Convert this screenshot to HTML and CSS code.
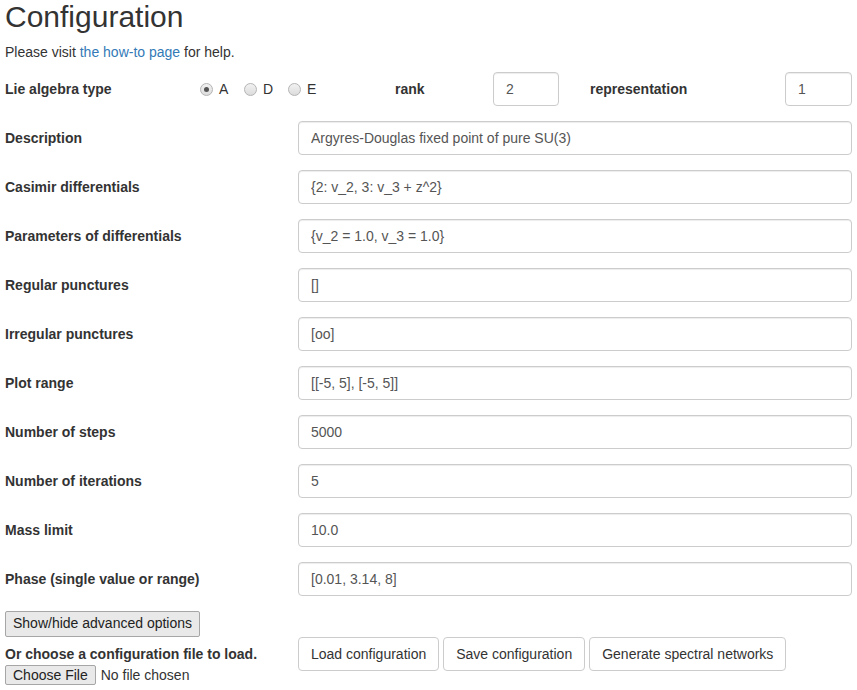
FILE: index.html
```html
<!DOCTYPE html>
<html>
<head>
<meta charset="utf-8">
<title>Configuration</title>
<link rel="stylesheet" href="styles.css">
</head>
<body>
<div class="page">
  <h2 class="title">Configuration</h2>
  <p class="intro">Please visit <a href="#" class="link">the how-to page</a> for help.</p>

  <div class="top-row">
    <label class="lbl">Lie algebra type</label>
    <div class="radios">
      <label class="radio-item"><input type="radio" name="type" class="radio" checked><span>A</span></label>
      <label class="radio-item"><input type="radio" name="type" class="radio"><span>D</span></label>
      <label class="radio-item"><input type="radio" name="type" class="radio"><span>E</span></label>
    </div>
    <label class="lbl">rank</label>
    <div><input type="text" class="field field-small" value="2"></div>
    <label class="lbl">representation</label>
    <div><input type="text" class="field field-small2" value="1"></div>
  </div>

  <div class="form-row"><label class="lbl">Description</label><input type="text" class="field" value="Argyres-Douglas fixed point of pure SU(3)"></div>
  <div class="form-row"><label class="lbl">Casimir differentials</label><input type="text" class="field" value="{2: v_2, 3: v_3 + z^2}"></div>
  <div class="form-row"><label class="lbl">Parameters of differentials</label><input type="text" class="field" value="{v_2 = 1.0, v_3 = 1.0}"></div>
  <div class="form-row"><label class="lbl">Regular punctures</label><input type="text" class="field" value="[]"></div>
  <div class="form-row"><label class="lbl">Irregular punctures</label><input type="text" class="field" value="[oo]"></div>
  <div class="form-row"><label class="lbl">Plot range</label><input type="text" class="field" value="[[-5, 5], [-5, 5]]"></div>
  <div class="form-row"><label class="lbl">Number of steps</label><input type="text" class="field" value="5000"></div>
  <div class="form-row"><label class="lbl">Number of iterations</label><input type="text" class="field" value="5"></div>
  <div class="form-row"><label class="lbl">Mass limit</label><input type="text" class="field" value="10.0"></div>
  <div class="form-row"><label class="lbl">Phase (single value or range)</label><input type="text" class="field" value="[0.01, 3.14, 8]"></div>

  <div class="bottom">
    <div class="bottom-left">
      <button class="plain-btn">Show/hide advanced options</button>
      <div class="lbl load-lbl">Or choose a configuration file to load.</div>
      <input type="file" class="file">
    </div>
    <div class="bottom-right">
      <button class="btn">Load configuration</button>
      <button class="btn">Save configuration</button>
      <button class="btn">Generate spectral networks</button>
    </div>
  </div>
</div>
</body>
</html>
```

FILE: styles.css
```css
html, body {
  margin: 0;
  padding: 0;
  background: #fff;
}
.page {
  padding: 0 5px;
  font-family: "Liberation Sans", Arial, sans-serif;
  font-size: 14px;
  line-height: 20px;
  color: #333;
}
.title {
  font-size: 30px;
  font-weight: 500;
  line-height: 33px;
  margin: 0 0 9px 0;
}
.intro {
  margin: 0 0 10px 0;
}
.link {
  color: #337ab7;
  text-decoration: none;
}
.lbl {
  font-weight: bold;
}
.top-row {
  display: grid;
  grid-template-columns: 195px 195px 98px 97px 195px 67px;
  align-items: center;
  margin-bottom: 15px;
}
.radios {
  display: flex;
  align-items: center;
}
.radio-item {
  display: inline-flex;
  align-items: center;
  width: 44px;
}
.radio {
  -webkit-appearance: none;
  appearance: none;
  width: 13px;
  height: 13px;
  margin: 0 6px 0 0;
  border: 1px solid #b4b4b4;
  border-radius: 50%;
  background: linear-gradient(#f2f2f2, #dcdcdc);
  box-sizing: border-box;
  position: relative;
}
.radio:checked::after {
  content: "";
  position: absolute;
  left: 3px;
  top: 3px;
  width: 5px;
  height: 5px;
  border-radius: 50%;
  background: #555;
}
.form-row {
  display: grid;
  grid-template-columns: 293px 1fr;
  align-items: center;
  margin-bottom: 15px;
}
.field {
  display: block;
  box-sizing: border-box;
  width: 100%;
  height: 34px;
  padding: 6px 12px;
  font-family: "Liberation Sans", Arial, sans-serif;
  font-size: 14px;
  line-height: 20px;
  color: #555;
  background: #fff;
  border: 1px solid #ccc;
  border-radius: 4px;
  box-shadow: inset 0 1px 1px rgba(0,0,0,.075);
  margin: 0;
}
.field-small {
  width: 66px;
}
.field-small2 {
  width: 67px;
}
.bottom {
  display: grid;
  grid-template-columns: 293px 1fr;
}
.bottom-left {
  display: flex;
  flex-direction: column;
  align-items: flex-start;
}
.plain-btn {
  font-family: "Liberation Sans", Arial, sans-serif;
  font-size: 14px;
  line-height: 17px;
  color: #222;
  background: #e9e9e9;
  border: 1px solid #a6a6a6;
  border-radius: 2px;
  padding: 3px 7px 4px 7px;
  margin: 0 0 7px 0;
}
.load-lbl {
  line-height: 20px;
}
.file {
  font-family: "Liberation Sans", Arial, sans-serif;
  font-size: 14px;
  color: #333;
  margin: 1px 0 0 0;
}
.file::file-selector-button {
  font-family: "Liberation Sans", Arial, sans-serif;
  font-size: 14px;
  color: #222;
  background: #e9e9e9;
  border: 1px solid #a6a6a6;
  border-radius: 2px;
  padding: 1px 7px;
  margin-right: 5px;
}
.bottom-right {
  display: flex;
  align-items: flex-start;
  gap: 4px;
  padding-top: 26px;
}
.btn {
  font-family: "Liberation Sans", Arial, sans-serif;
  font-size: 14px;
  line-height: 20px;
  color: #333;
  background: #fff;
  border: 1px solid #ccc;
  border-radius: 4px;
  padding: 6px 12px;
  margin: 0;
}
```
